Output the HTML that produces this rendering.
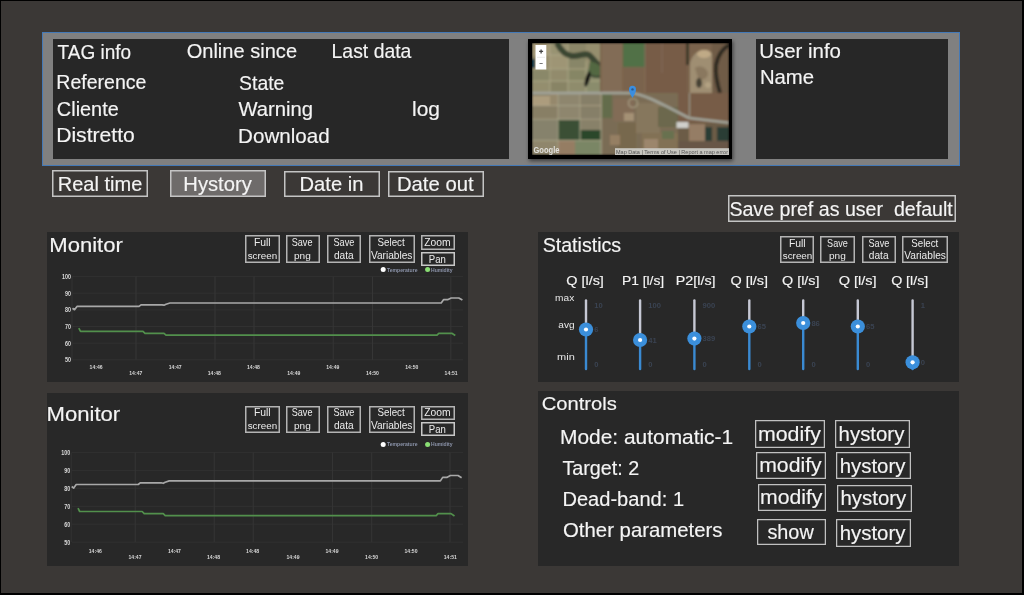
<!DOCTYPE html>
<html><head><meta charset="utf-8"><style>
html,body{margin:0;padding:0;}
body{width:1024px;height:595px;background:#000;position:relative;overflow:hidden;font-family:"Liberation Sans",sans-serif;}
.a{position:absolute;box-sizing:border-box;}
svg text{font-family:"Liberation Sans",sans-serif;white-space:pre;}
svg{will-change:transform;}
</style></head><body>
<div class="a" style="left:1px;top:1px;width:1021px;height:592px;background:#3b3836;"></div><div class="a" style="left:42px;top:32px;width:918px;height:134px;background:#808080;box-shadow: inset 0 0 0 1px #4479b6;"></div><div class="a" style="left:53px;top:39px;width:456px;height:120px;background:#272727;"></div><div class="a" style="left:756px;top:39px;width:192px;height:120px;background:#272727;"></div><div class="a" style="left:528px;top:39px;width:204px;height:120px;background:#000;box-shadow:1px 2px 4px rgba(0,0,0,0.55);"></div><div class="a" style="left:52.3px;top:170.2px;width:96.10000000000001px;height:27.30000000000001px;box-shadow: inset 0 0 0 1.5px #c4c4c4;"></div><div class="a" style="left:170.2px;top:170.2px;width:95.80000000000001px;height:27.30000000000001px;background:#6e6b6a;box-shadow: inset 0 0 0 1.5px #c4c4c4;"></div><div class="a" style="left:284.1px;top:170.5px;width:95.79999999999995px;height:26.900000000000006px;box-shadow: inset 0 0 0 1.5px #c4c4c4;"></div><div class="a" style="left:388.1px;top:170.5px;width:96.0px;height:26.900000000000006px;box-shadow: inset 0 0 0 1.5px #c4c4c4;"></div><div class="a" style="left:728px;top:194.9px;width:228.29999999999995px;height:27.599999999999994px;box-shadow: inset 0 0 0 1.5px #c4c4c4;"></div><div class="a" style="left:47px;top:232px;width:421px;height:150px;background:#282828;"></div><div class="a" style="left:47px;top:393px;width:421px;height:173px;background:#282828;"></div><div class="a" style="left:538px;top:232px;width:421px;height:150px;background:#282828;"></div><div class="a" style="left:538px;top:391px;width:421px;height:175px;background:#282828;"></div><div class="a" style="left:245.2px;top:235.3px;width:34.5px;height:27.599999999999966px;box-shadow: inset 0 0 0 1.5px #b4b4b4;"></div><div class="a" style="left:285.6px;top:235.3px;width:34.099999999999966px;height:27.599999999999966px;box-shadow: inset 0 0 0 1.5px #b4b4b4;"></div><div class="a" style="left:327px;top:235.3px;width:34.39999999999998px;height:27.599999999999966px;box-shadow: inset 0 0 0 1.5px #b4b4b4;"></div><div class="a" style="left:369px;top:235.3px;width:45.5px;height:27.599999999999966px;box-shadow: inset 0 0 0 1.5px #b4b4b4;"></div><div class="a" style="left:420.6px;top:235.2px;width:34.19999999999999px;height:14.800000000000011px;box-shadow: inset 0 0 0 1.5px #b4b4b4;"></div><div class="a" style="left:420.6px;top:251.8px;width:34.19999999999999px;height:14.099999999999966px;box-shadow: inset 0 0 0 1.5px #c8c8c8;"></div><div class="a" style="left:245.2px;top:405.6px;width:34.5px;height:27.599999999999966px;box-shadow: inset 0 0 0 1.5px #b4b4b4;"></div><div class="a" style="left:285.6px;top:405.6px;width:34.099999999999966px;height:27.599999999999966px;box-shadow: inset 0 0 0 1.5px #b4b4b4;"></div><div class="a" style="left:327px;top:405.6px;width:34.39999999999998px;height:27.599999999999966px;box-shadow: inset 0 0 0 1.5px #b4b4b4;"></div><div class="a" style="left:369px;top:405.6px;width:45.5px;height:27.599999999999966px;box-shadow: inset 0 0 0 1.5px #b4b4b4;"></div><div class="a" style="left:420.6px;top:405.5px;width:34.19999999999999px;height:14.800000000000011px;box-shadow: inset 0 0 0 1.5px #b4b4b4;"></div><div class="a" style="left:420.6px;top:422.1px;width:34.19999999999999px;height:14.099999999999966px;box-shadow: inset 0 0 0 1.5px #c8c8c8;"></div><div class="a" style="left:780.2px;top:235.8px;width:34.299999999999955px;height:27.0px;box-shadow: inset 0 0 0 1.5px #b4b4b4;"></div><div class="a" style="left:820.2px;top:235.8px;width:34.39999999999998px;height:27.0px;box-shadow: inset 0 0 0 1.5px #b4b4b4;"></div><div class="a" style="left:862.2px;top:235.8px;width:33.39999999999998px;height:27.0px;box-shadow: inset 0 0 0 1.5px #b4b4b4;"></div><div class="a" style="left:902.2px;top:235.8px;width:45.5px;height:27.0px;box-shadow: inset 0 0 0 1.5px #b4b4b4;"></div><div class="a" style="left:755.3px;top:420.3px;width:69.30000000000007px;height:27.399999999999977px;box-shadow: inset 0 0 0 1.25px #c0c0c0;"></div><div class="a" style="left:834.9px;top:420.3px;width:74.89999999999998px;height:27.399999999999977px;box-shadow: inset 0 0 0 1.25px #c0c0c0;"></div><div class="a" style="left:756.4px;top:451.6px;width:69.30000000000007px;height:27.0px;box-shadow: inset 0 0 0 1.25px #c0c0c0;"></div><div class="a" style="left:836.2px;top:452.4px;width:74.5px;height:27.100000000000023px;box-shadow: inset 0 0 0 1.25px #c0c0c0;"></div><div class="a" style="left:757.6px;top:483.6px;width:68.89999999999998px;height:27.099999999999966px;box-shadow: inset 0 0 0 1.25px #c0c0c0;"></div><div class="a" style="left:837px;top:484.8px;width:74.5px;height:27.0px;box-shadow: inset 0 0 0 1.25px #c0c0c0;"></div><div class="a" style="left:756.8px;top:518.6px;width:68.90000000000009px;height:26.799999999999955px;box-shadow: inset 0 0 0 1.25px #c0c0c0;"></div><div class="a" style="left:836.2px;top:519.4px;width:74.59999999999991px;height:27.399999999999977px;box-shadow: inset 0 0 0 1.25px #c0c0c0;"></div>
<svg class="a" style="left:531.5px;top:43px;" width="196.5" height="112" viewBox="0 0 196.5 112"><defs><filter id="bl"><feGaussianBlur stdDeviation="1.0"/><feComponentTransfer><feFuncR type="linear" slope="0.95"/><feFuncG type="linear" slope="0.95"/><feFuncB type="linear" slope="0.95"/></feComponentTransfer></filter><filter id="bl2"><feGaussianBlur stdDeviation="0.35"/></filter></defs><g filter="url(#bl)"><rect x="0" y="0" width="197" height="112" fill="#84725a"/><rect x="0" y="0" width="70" height="50" fill="#9a9272"/><rect x="0" y="0" width="18" height="12" fill="#a89c7a"/><rect x="18" y="0" width="18" height="12" fill="#9c9676"/><rect x="36" y="0" width="18" height="12" fill="#8f8a6a"/><rect x="0" y="12" width="18" height="14" fill="#9a9070"/><rect x="18" y="12" width="18" height="14" fill="#a29a78"/><rect x="36" y="12" width="18" height="14" fill="#8c8a6a"/><rect x="0" y="26" width="18" height="12" fill="#8e8c6c"/><rect x="18" y="26" width="18" height="12" fill="#958f70"/><rect x="36" y="26" width="18" height="12" fill="#8a8a68"/><rect x="0" y="38" width="18" height="12" fill="#989272"/><rect x="18" y="38" width="18" height="12" fill="#8c8868"/><rect x="36" y="38" width="18" height="12" fill="#939070"/><rect x="54" y="26" width="16" height="24" fill="#8e9070"/><path d="M18,0 V50 M36,0 V50 M54,18 V50 M0,12 H54 M0,26 H54 M0,38 H70" stroke="#b2ab8c" stroke-width="0.9" fill="none"/><rect x="0" y="16" width="3" height="9" fill="#1e4a5a"/><path d="M25,0 C28,6 32,12 40,13 C48,14 52,9 57,12 C62,16 64,22 70,24 C73,26 74,29 70,31 C66,33 62,32 58,30" stroke="#3e4a36" stroke-width="6" fill="none"/><path d="M58,18 C64,20 70,22 72,30 C68,34 62,34 56,30 Z" fill="#566a44"/><ellipse cx="55.5" cy="36" rx="2.2" ry="8" transform="rotate(15 55.5 36)" fill="#121414"/><rect x="68" y="0" width="129" height="50" fill="#7e6650"/><rect x="70" y="0" width="20" height="50" fill="#86705a"/><rect x="91" y="0" width="22" height="24" fill="#557548"/><rect x="113" y="0" width="42" height="50" fill="#7a5e48"/><path d="M113,0 V50 M130,0 V30" stroke="#8c7a64" stroke-width="0.8"/><rect x="154" y="0" width="3" height="22" fill="#403a2c"/><path d="M158,50 L158,20 C160,12 166,6 174,7 C181,8 182,14 180,22 L180,50 Z" fill="#a39276"/><ellipse cx="172" cy="11" rx="7" ry="4" fill="#c4ae8a"/><path d="M163,25 C168,22 174,24 176,30 C176,36 170,38 166,35 Z" fill="#8e7c62"/><ellipse cx="167" cy="40" rx="3" ry="5" fill="#4a4438"/><ellipse cx="176" cy="42" rx="3" ry="3" fill="#b8a686"/><rect x="180" y="0" width="17" height="50" fill="#735e48"/><path d="M197,2 C190,6 186,12 184,22 C183,32 185,40 188,50" stroke="#332e28" stroke-width="4" fill="none"/><rect x="0" y="50" width="70" height="62" fill="#8e8670"/><rect x="0" y="53" width="18" height="10" fill="#b0a080"/><rect x="18" y="50" width="8" height="13" fill="#9a8c70"/><rect x="26" y="50" width="22" height="27" fill="#928a72"/><rect x="48" y="50" width="22" height="27" fill="#8a826a"/><rect x="0" y="63" width="26" height="13" fill="#8c8268"/><rect x="0" y="76" width="26" height="21" fill="#8a8670"/><rect x="26" y="77" width="22" height="20" fill="#3e5238"/><rect x="48" y="77" width="21" height="10" fill="#8c846c"/><rect x="48.5" y="87" width="20.5" height="10" fill="#2e4a2e"/><rect x="0" y="97" width="26" height="15" fill="#938a6e"/><rect x="26" y="97" width="17" height="15" fill="#9a8066"/><rect x="43" y="97" width="26" height="15" fill="#7e8a68"/><path d="M26,50 V112 M48,50 V97 M69,50 V112 M0,62.6 H69 M0,76.2 H69 M0,97.4 H69" stroke="#aea88c" stroke-width="0.9" fill="none"/><rect x="70" y="50" width="76" height="62" fill="#7e7058"/><rect x="70" y="50" width="10" height="25" fill="#66704e"/><rect x="82" y="56" width="20" height="22" fill="#86705a"/><rect x="104" y="60" width="24" height="30" fill="#8a7a60"/><rect x="86" y="80" width="18" height="30" fill="#7a6a50"/><rect x="110" y="90" width="36" height="22" fill="#867458"/><rect x="126" y="64" width="20" height="20" fill="#6e6a50"/><circle cx="101" cy="60" r="4.5" fill="none" stroke="#b0a68c" stroke-width="1.6" opacity="0.7"/><rect x="92" y="70" width="10" height="8" fill="#a89478"/><rect x="112" y="96" width="14" height="10" fill="#a08a70"/><rect x="78" y="92" width="10" height="10" fill="#9a8266"/><rect x="130" y="88" width="12" height="8" fill="#6a7452"/><rect x="146" y="50" width="51" height="30" fill="#7a5e48"/><rect x="146" y="80" width="51" height="32" fill="#6e5e4a"/><rect x="157" y="81" width="16" height="17" fill="#9a8068"/><rect x="173" y="84" width="7" height="14" fill="#2e4038"/><rect x="185" y="84" width="12" height="14" fill="#2e4038"/><rect x="146" y="98" width="51" height="14" fill="#6a5a48"/><path d="M0,50 L98,50 C112,51 128,60 157,75 L197,79.7" stroke="#a6a89e" stroke-width="2.6" fill="none"/><path d="M157.5,50 V76" stroke="#a09e90" stroke-width="1.2" fill="none"/><rect x="144.5" y="79" width="12" height="6" fill="#d4d4d0"/></g><g filter="url(#bl2)"><path d="M100.5,55 C98,50.5 97,49 97,46.2 A3.5,3.5 0 1 1 104,46.2 C104,49 103,50.5 100.5,55 Z" fill="#3a8ee0"/><circle cx="100.5" cy="46.4" r="1.2" fill="#2a5a90"/><rect x="3.5" y="2" width="10.8" height="24.5" fill="#ffffff"/><line x1="5" y1="14.3" x2="13" y2="14.3" stroke="#dcdcdc" stroke-width="0.6"/><path d="M7.1,8.4 H11.1 M9.1,6.4 V10.4" stroke="#444" stroke-width="1.3"/><path d="M7.5,20.5 H10.7" stroke="#777" stroke-width="1"/><text x="1.5" y="109.5" font-size="9.5" font-weight="bold" fill="#eeeeee" opacity="0.85" textLength="26" lengthAdjust="spacingAndGlyphs">Google</text><rect x="83" y="105.2" width="114" height="6.8" fill="#d0d0cc" opacity="0.9"/><text x="84" y="110.6" font-size="5.2" fill="#555" textLength="112" lengthAdjust="spacingAndGlyphs">Map Data | Terms of Use | Report a map error</text></g></svg>
<svg class="a" style="left:0;top:0" width="1024" height="595" viewBox="0 0 1024 595">
<line x1="72" y1="276.6" x2="463" y2="276.6" stroke="#313131" stroke-width="1"/><line x1="72" y1="293.2" x2="463" y2="293.2" stroke="#313131" stroke-width="1"/><line x1="72" y1="309.9" x2="463" y2="309.9" stroke="#313131" stroke-width="1"/><line x1="72" y1="326.5" x2="463" y2="326.5" stroke="#313131" stroke-width="1"/><line x1="72" y1="343.2" x2="463" y2="343.2" stroke="#313131" stroke-width="1"/><line x1="72" y1="359.8" x2="463" y2="359.8" stroke="#313131" stroke-width="1"/><line x1="136" y1="276.6" x2="136" y2="359.8" stroke="#363636" stroke-width="1"/><line x1="215" y1="276.6" x2="215" y2="359.8" stroke="#363636" stroke-width="1"/><line x1="254" y1="276.6" x2="254" y2="359.8" stroke="#363636" stroke-width="1"/><line x1="333.2" y1="276.6" x2="333.2" y2="359.8" stroke="#363636" stroke-width="1"/><line x1="372.5" y1="276.6" x2="372.5" y2="359.8" stroke="#363636" stroke-width="1"/><line x1="450.8" y1="276.6" x2="450.8" y2="359.8" stroke="#363636" stroke-width="1"/><line x1="72" y1="276.6" x2="72" y2="359.8" stroke="#333" stroke-width="1"/><text x="62" y="278.9" font-size="6.4" font-weight="bold" fill="#d8d8d8" textLength="9" lengthAdjust="spacingAndGlyphs">100</text><text x="65" y="295.5" font-size="6.4" font-weight="bold" fill="#d8d8d8" textLength="6" lengthAdjust="spacingAndGlyphs">90</text><text x="65" y="312.2" font-size="6.4" font-weight="bold" fill="#d8d8d8" textLength="6" lengthAdjust="spacingAndGlyphs">80</text><text x="65" y="328.8" font-size="6.4" font-weight="bold" fill="#d8d8d8" textLength="6" lengthAdjust="spacingAndGlyphs">70</text><text x="65" y="345.5" font-size="6.4" font-weight="bold" fill="#d8d8d8" textLength="6" lengthAdjust="spacingAndGlyphs">60</text><text x="65" y="362.1" font-size="6.4" font-weight="bold" fill="#d8d8d8" textLength="6" lengthAdjust="spacingAndGlyphs">50</text><text x="96.1" y="369.3" font-size="6" font-weight="bold" text-anchor="middle" fill="#d8d8d8" textLength="13" lengthAdjust="spacingAndGlyphs">14:46</text><text x="135.8" y="375.0" font-size="6" font-weight="bold" text-anchor="middle" fill="#d8d8d8" textLength="13" lengthAdjust="spacingAndGlyphs">14:47</text><text x="175.2" y="369.3" font-size="6" font-weight="bold" text-anchor="middle" fill="#d8d8d8" textLength="13" lengthAdjust="spacingAndGlyphs">14:47</text><text x="214.3" y="375.0" font-size="6" font-weight="bold" text-anchor="middle" fill="#d8d8d8" textLength="13" lengthAdjust="spacingAndGlyphs">14:48</text><text x="253.4" y="369.3" font-size="6" font-weight="bold" text-anchor="middle" fill="#d8d8d8" textLength="13" lengthAdjust="spacingAndGlyphs">14:48</text><text x="293.8" y="375.0" font-size="6" font-weight="bold" text-anchor="middle" fill="#d8d8d8" textLength="13" lengthAdjust="spacingAndGlyphs">14:49</text><text x="332.8" y="369.3" font-size="6" font-weight="bold" text-anchor="middle" fill="#d8d8d8" textLength="13" lengthAdjust="spacingAndGlyphs">14:49</text><text x="372.4" y="375.0" font-size="6" font-weight="bold" text-anchor="middle" fill="#d8d8d8" textLength="13" lengthAdjust="spacingAndGlyphs">14:50</text><text x="411.8" y="369.3" font-size="6" font-weight="bold" text-anchor="middle" fill="#d8d8d8" textLength="13" lengthAdjust="spacingAndGlyphs">14:50</text><text x="451.1" y="375.0" font-size="6" font-weight="bold" text-anchor="middle" fill="#d8d8d8" textLength="13" lengthAdjust="spacingAndGlyphs">14:51</text><polyline points="72.5,308.2 74.5,309.7 77.0,306.4 139.0,306.4 141.0,304.8 162.0,304.8 164.0,305.2 166.0,304.2 170.0,303.0 441.2,303.0 443.5,299.7 447.6,299.7 451.2,298.0 458.8,298.0 462.4,300.1" fill="none" stroke="#a8a8a8" stroke-width="1.7" stroke-linejoin="round"/><polyline points="78.8,328.2 80.5,331.3 143.0,331.3 145.0,333.3 164.0,333.3 166.0,335.2 437.0,335.2 438.8,333.3 451.8,333.3 455.3,335.5" fill="none" stroke="#52904c" stroke-width="1.7" stroke-linejoin="round"/><circle cx="383.2" cy="269.5" r="2.5" fill="#ffffff"/><text x="387" y="271.5" font-size="5.6" font-weight="bold" fill="#8c94aa" textLength="30.5" lengthAdjust="spacingAndGlyphs">Temperature</text><circle cx="427.6" cy="269.5" r="2.5" fill="#8ade74"/><text x="431" y="271.5" font-size="5.6" font-weight="bold" fill="#8c94aa" textLength="21.6" lengthAdjust="spacingAndGlyphs">Humidity</text><line x1="72" y1="452.4" x2="463" y2="452.4" stroke="#313131" stroke-width="1"/><line x1="72" y1="470.4" x2="463" y2="470.4" stroke="#313131" stroke-width="1"/><line x1="72" y1="488.3" x2="463" y2="488.3" stroke="#313131" stroke-width="1"/><line x1="72" y1="506.3" x2="463" y2="506.3" stroke="#313131" stroke-width="1"/><line x1="72" y1="524.2" x2="463" y2="524.2" stroke="#313131" stroke-width="1"/><line x1="72" y1="542.2" x2="463" y2="542.2" stroke="#313131" stroke-width="1"/><line x1="135.2" y1="452.4" x2="135.2" y2="542.2" stroke="#363636" stroke-width="1"/><line x1="214.2" y1="452.4" x2="214.2" y2="542.2" stroke="#363636" stroke-width="1"/><line x1="253.2" y1="452.4" x2="253.2" y2="542.2" stroke="#363636" stroke-width="1"/><line x1="332.4" y1="452.4" x2="332.4" y2="542.2" stroke="#363636" stroke-width="1"/><line x1="371.7" y1="452.4" x2="371.7" y2="542.2" stroke="#363636" stroke-width="1"/><line x1="450.0" y1="452.4" x2="450.0" y2="542.2" stroke="#363636" stroke-width="1"/><line x1="71.2" y1="452.4" x2="71.2" y2="542.2" stroke="#333" stroke-width="1"/><text x="61.2" y="454.7" font-size="6.4" font-weight="bold" fill="#d8d8d8" textLength="9" lengthAdjust="spacingAndGlyphs">100</text><text x="64.2" y="472.7" font-size="6.4" font-weight="bold" fill="#d8d8d8" textLength="6" lengthAdjust="spacingAndGlyphs">90</text><text x="64.2" y="490.6" font-size="6.4" font-weight="bold" fill="#d8d8d8" textLength="6" lengthAdjust="spacingAndGlyphs">80</text><text x="64.2" y="508.6" font-size="6.4" font-weight="bold" fill="#d8d8d8" textLength="6" lengthAdjust="spacingAndGlyphs">70</text><text x="64.2" y="526.5" font-size="6.4" font-weight="bold" fill="#d8d8d8" textLength="6" lengthAdjust="spacingAndGlyphs">60</text><text x="64.2" y="544.5" font-size="6.4" font-weight="bold" fill="#d8d8d8" textLength="6" lengthAdjust="spacingAndGlyphs">50</text><text x="95.3" y="552.7" font-size="6" font-weight="bold" text-anchor="middle" fill="#d8d8d8" textLength="13" lengthAdjust="spacingAndGlyphs">14:46</text><text x="135.0" y="558.8" font-size="6" font-weight="bold" text-anchor="middle" fill="#d8d8d8" textLength="13" lengthAdjust="spacingAndGlyphs">14:47</text><text x="174.39999999999998" y="552.7" font-size="6" font-weight="bold" text-anchor="middle" fill="#d8d8d8" textLength="13" lengthAdjust="spacingAndGlyphs">14:47</text><text x="213.5" y="558.8" font-size="6" font-weight="bold" text-anchor="middle" fill="#d8d8d8" textLength="13" lengthAdjust="spacingAndGlyphs">14:48</text><text x="252.6" y="552.7" font-size="6" font-weight="bold" text-anchor="middle" fill="#d8d8d8" textLength="13" lengthAdjust="spacingAndGlyphs">14:48</text><text x="293.0" y="558.8" font-size="6" font-weight="bold" text-anchor="middle" fill="#d8d8d8" textLength="13" lengthAdjust="spacingAndGlyphs">14:49</text><text x="332.0" y="552.7" font-size="6" font-weight="bold" text-anchor="middle" fill="#d8d8d8" textLength="13" lengthAdjust="spacingAndGlyphs">14:49</text><text x="371.59999999999997" y="558.8" font-size="6" font-weight="bold" text-anchor="middle" fill="#d8d8d8" textLength="13" lengthAdjust="spacingAndGlyphs">14:50</text><text x="411.0" y="552.7" font-size="6" font-weight="bold" text-anchor="middle" fill="#d8d8d8" textLength="13" lengthAdjust="spacingAndGlyphs">14:50</text><text x="450.3" y="558.8" font-size="6" font-weight="bold" text-anchor="middle" fill="#d8d8d8" textLength="13" lengthAdjust="spacingAndGlyphs">14:51</text><polyline points="71.7,486.5 73.7,488.1 76.2,484.5 138.2,484.5 140.2,482.8 161.2,482.8 163.2,483.3 165.2,482.2 169.2,480.9 440.4,480.9 442.7,477.4 446.8,477.4 450.4,475.5 458.0,475.5 461.6,477.7" fill="none" stroke="#a8a8a8" stroke-width="1.7" stroke-linejoin="round"/><polyline points="78.0,508.1 79.7,511.5 142.2,511.5 144.2,513.6 163.2,513.6 165.2,515.6 436.2,515.6 438.0,513.6 451.0,513.6 454.5,516.0" fill="none" stroke="#52904c" stroke-width="1.7" stroke-linejoin="round"/><circle cx="383.2" cy="444.4" r="2.5" fill="#ffffff"/><text x="387" y="446.4" font-size="5.6" font-weight="bold" fill="#8c94aa" textLength="30.5" lengthAdjust="spacingAndGlyphs">Temperature</text><circle cx="427.6" cy="444.4" r="2.5" fill="#8ade74"/><text x="431" y="446.4" font-size="5.6" font-weight="bold" fill="#8c94aa" textLength="21.6" lengthAdjust="spacingAndGlyphs">Humidity</text>
<line x1="586" y1="300.5" x2="586" y2="329.5" stroke="#c6c8d4" stroke-width="2.4" stroke-linecap="round"/><line x1="586" y1="329.5" x2="586" y2="369" stroke="#3a8ad2" stroke-width="2.4" stroke-linecap="round"/><circle cx="586" cy="329.5" r="7.1" fill="#3b8fdb"/><circle cx="586" cy="329.5" r="2.1" fill="#ffffff"/><text x="594.2" y="308.0" font-size="7.6" font-weight="bold" fill="#3a4352">10</text><text x="594.2" y="332.1" font-size="7.6" font-weight="bold" fill="#3a4352">6</text><text x="594.2" y="366.90000000000003" font-size="7.6" font-weight="bold" fill="#3a4352">0</text><line x1="640.1" y1="300.5" x2="640.1" y2="340" stroke="#c6c8d4" stroke-width="2.4" stroke-linecap="round"/><line x1="640.1" y1="340" x2="640.1" y2="369" stroke="#3a8ad2" stroke-width="2.4" stroke-linecap="round"/><circle cx="640.1" cy="340" r="7.1" fill="#3b8fdb"/><circle cx="640.1" cy="340" r="2.1" fill="#ffffff"/><text x="648.3000000000001" y="308.0" font-size="7.6" font-weight="bold" fill="#3a4352">100</text><text x="648.3000000000001" y="342.6" font-size="7.6" font-weight="bold" fill="#3a4352">41</text><text x="648.3000000000001" y="366.90000000000003" font-size="7.6" font-weight="bold" fill="#3a4352">0</text><line x1="694.4" y1="300.5" x2="694.4" y2="338.6" stroke="#c6c8d4" stroke-width="2.4" stroke-linecap="round"/><line x1="694.4" y1="338.6" x2="694.4" y2="369" stroke="#3a8ad2" stroke-width="2.4" stroke-linecap="round"/><circle cx="694.4" cy="338.6" r="7.1" fill="#3b8fdb"/><circle cx="694.4" cy="338.6" r="2.1" fill="#ffffff"/><text x="702.6" y="308.0" font-size="7.6" font-weight="bold" fill="#3a4352">900</text><text x="702.6" y="341.20000000000005" font-size="7.6" font-weight="bold" fill="#3a4352">389</text><text x="702.6" y="366.90000000000003" font-size="7.6" font-weight="bold" fill="#3a4352">0</text><line x1="749.3" y1="300.5" x2="749.3" y2="326.5" stroke="#c6c8d4" stroke-width="2.4" stroke-linecap="round"/><line x1="749.3" y1="326.5" x2="749.3" y2="369" stroke="#3a8ad2" stroke-width="2.4" stroke-linecap="round"/><circle cx="749.3" cy="326.5" r="7.1" fill="#3b8fdb"/><circle cx="749.3" cy="326.5" r="2.1" fill="#ffffff"/><text x="757.5" y="329.1" font-size="7.6" font-weight="bold" fill="#3a4352">65</text><text x="757.5" y="366.90000000000003" font-size="7.6" font-weight="bold" fill="#3a4352">0</text><line x1="803.2" y1="300.5" x2="803.2" y2="323" stroke="#c6c8d4" stroke-width="2.4" stroke-linecap="round"/><line x1="803.2" y1="323" x2="803.2" y2="369" stroke="#3a8ad2" stroke-width="2.4" stroke-linecap="round"/><circle cx="803.2" cy="323" r="7.1" fill="#3b8fdb"/><circle cx="803.2" cy="323" r="2.1" fill="#ffffff"/><text x="811.4000000000001" y="325.6" font-size="7.6" font-weight="bold" fill="#3a4352">86</text><text x="811.4000000000001" y="366.90000000000003" font-size="7.6" font-weight="bold" fill="#3a4352">0</text><line x1="857.8" y1="300.5" x2="857.8" y2="326.5" stroke="#c6c8d4" stroke-width="2.4" stroke-linecap="round"/><line x1="857.8" y1="326.5" x2="857.8" y2="369" stroke="#3a8ad2" stroke-width="2.4" stroke-linecap="round"/><circle cx="857.8" cy="326.5" r="7.1" fill="#3b8fdb"/><circle cx="857.8" cy="326.5" r="2.1" fill="#ffffff"/><text x="866.0" y="329.1" font-size="7.6" font-weight="bold" fill="#3a4352">65</text><text x="866.0" y="366.90000000000003" font-size="7.6" font-weight="bold" fill="#3a4352">0</text><line x1="912.6" y1="300.5" x2="912.6" y2="362.3" stroke="#c6c8d4" stroke-width="2.4" stroke-linecap="round"/><line x1="912.6" y1="362.3" x2="912.6" y2="369" stroke="#3a8ad2" stroke-width="2.4" stroke-linecap="round"/><circle cx="912.6" cy="362.3" r="7.1" fill="#3b8fdb"/><circle cx="912.6" cy="362.3" r="2.1" fill="#ffffff"/><text x="920.8000000000001" y="308.0" font-size="7.6" font-weight="bold" fill="#3a4352">1</text><text x="920.8000000000001" y="364.90000000000003" font-size="7.6" font-weight="bold" fill="#3a4352">0</text>
<text transform="translate(57.50,59.40) scale(0.9779,1)" font-size="19.48" fill="#f4f4f4" stroke="#f4f4f4" stroke-width="0.15">TAG info</text>
<text transform="translate(186.66,58.40) scale(1.0302,1)" font-size="19.48" fill="#f4f4f4" stroke="#f4f4f4" stroke-width="0.15">Online since</text>
<text transform="translate(331.58,58.40) scale(0.9966,1)" font-size="19.48" fill="#f4f4f4" stroke="#f4f4f4" stroke-width="0.15">Last data</text>
<text transform="translate(56.27,88.70) scale(1.0036,1)" font-size="19.48" fill="#f4f4f4" stroke="#f4f4f4" stroke-width="0.15">Reference</text>
<text transform="translate(56.87,115.50) scale(1.0212,1)" font-size="19.48" fill="#f4f4f4" stroke="#f4f4f4" stroke-width="0.15">Cliente</text>
<text transform="translate(56.15,141.80) scale(1.0850,1)" font-size="19.48" fill="#f4f4f4" stroke="#f4f4f4" stroke-width="0.15">Distretto</text>
<text transform="translate(239.09,89.60) scale(0.9955,1)" font-size="19.48" fill="#f4f4f4" stroke="#f4f4f4" stroke-width="0.15">State</text>
<text transform="translate(238.40,116.30) scale(1.0405,1)" font-size="19.48" fill="#f4f4f4" stroke="#f4f4f4" stroke-width="0.15">Warning</text>
<text transform="translate(238.09,142.90) scale(1.0579,1)" font-size="19.48" fill="#f4f4f4" stroke="#f4f4f4" stroke-width="0.15">Download</text>
<text transform="translate(411.99,116.20) scale(1.0337,1)" font-size="20.29" fill="#f4f4f4" stroke="#f4f4f4" stroke-width="0.15">log</text>
<text transform="translate(759.22,58.40) scale(1.0493,1)" font-size="19.48" fill="#f4f4f4" stroke="#f4f4f4" stroke-width="0.15">User info</text>
<text transform="translate(759.91,84.20) scale(1.0430,1)" font-size="19.48" fill="#f4f4f4" stroke="#f4f4f4" stroke-width="0.15">Name</text>
<text transform="translate(57.74,191.10) scale(1.0057,1)" font-size="19.91" fill="#f4f4f4" stroke="#f4f4f4" stroke-width="0.15">Real time</text>
<text transform="translate(183.32,191.10) scale(1.0148,1)" font-size="19.91" fill="#f4f4f4" stroke="#f4f4f4" stroke-width="0.15">Hystory</text>
<text transform="translate(299.52,191.00) scale(1.0445,1)" font-size="19.34" fill="#f4f4f4" stroke="#f4f4f4" stroke-width="0.15">Date in</text>
<text transform="translate(396.91,191.00) scale(1.0506,1)" font-size="19.34" fill="#f4f4f4" stroke="#f4f4f4" stroke-width="0.15">Date out</text>
<text transform="translate(729.39,216.40) scale(0.9852,1)" font-size="19.91" fill="#f4f4f4" stroke="#f4f4f4" stroke-width="0.15">Save pref as user  default</text>
<text transform="translate(49.27,252.30) scale(1.1090,1)" font-size="19.91" fill="#f4f4f4" stroke="#f4f4f4" stroke-width="0.15">Monitor</text>
<text transform="translate(46.47,420.80) scale(1.0949,1)" font-size="20.20" fill="#f4f4f4" stroke="#f4f4f4" stroke-width="0.15">Monitor</text>
<text transform="translate(542.69,251.90) scale(0.9857,1)" font-size="19.91" fill="#f4f4f4" stroke="#f4f4f4" stroke-width="0.15">Statistics</text>
<text transform="translate(541.65,409.80) scale(1.0594,1)" font-size="19.06" fill="#f4f4f4" stroke="#f4f4f4" stroke-width="0.15">Controls</text>
<text transform="translate(560.07,443.80) scale(1.0434,1)" font-size="20.05" fill="#f4f4f4" stroke="#f4f4f4" stroke-width="0.15">Mode: automatic-1</text>
<text transform="translate(562.39,474.60) scale(0.9869,1)" font-size="20.05" fill="#f4f4f4" stroke="#f4f4f4" stroke-width="0.15">Target: 2</text>
<text transform="translate(562.43,506.30) scale(1.0085,1)" font-size="19.91" fill="#f4f4f4" stroke="#f4f4f4" stroke-width="0.15">Dead-band: 1</text>
<text transform="translate(563.05,537.00) scale(1.0522,1)" font-size="19.34" fill="#f4f4f4" stroke="#f4f4f4" stroke-width="0.15">Other parameters</text>
<text transform="translate(757.96,440.80) scale(1.0392,1)" font-size="20.56" fill="#f4f4f4" stroke="#f4f4f4" stroke-width="0.15">modify</text>
<text transform="translate(838.62,440.80) scale(0.9925,1)" font-size="20.56" fill="#f4f4f4" stroke="#f4f4f4" stroke-width="0.15">hystory</text>
<text transform="translate(759.17,471.70) scale(1.0325,1)" font-size="20.56" fill="#f4f4f4" stroke="#f4f4f4" stroke-width="0.15">modify</text>
<text transform="translate(839.72,472.50) scale(0.9925,1)" font-size="20.56" fill="#f4f4f4" stroke="#f4f4f4" stroke-width="0.15">hystory</text>
<text transform="translate(759.97,504.10) scale(1.0325,1)" font-size="20.56" fill="#f4f4f4" stroke="#f4f4f4" stroke-width="0.15">modify</text>
<text transform="translate(840.52,505.10) scale(0.9925,1)" font-size="20.56" fill="#f4f4f4" stroke="#f4f4f4" stroke-width="0.15">hystory</text>
<text transform="translate(767.39,538.70) scale(0.9660,1)" font-size="20.56" fill="#f4f4f4" stroke="#f4f4f4" stroke-width="0.15">show</text>
<text transform="translate(839.72,540.00) scale(0.9925,1)" font-size="20.56" fill="#f4f4f4" stroke="#f4f4f4" stroke-width="0.15">hystory</text>
<text transform="translate(566.33,284.90) scale(1.0864,1)" font-size="13.23" fill="#f4f4f4" stroke="#f4f4f4" stroke-width="0.15">Q [l/s]</text>
<text transform="translate(621.92,284.90) scale(1.0462,1)" font-size="13.23" fill="#f4f4f4" stroke="#f4f4f4" stroke-width="0.15">P1 [l/s]</text>
<text transform="translate(675.78,284.90) scale(1.0819,1)" font-size="13.23" fill="#f4f4f4" stroke="#f4f4f4" stroke-width="0.15">P2[l/s]</text>
<text transform="translate(730.42,284.90) scale(1.0894,1)" font-size="13.23" fill="#f4f4f4" stroke="#f4f4f4" stroke-width="0.15">Q [l/s]</text>
<text transform="translate(782.03,284.90) scale(1.0834,1)" font-size="13.23" fill="#f4f4f4" stroke="#f4f4f4" stroke-width="0.15">Q [l/s]</text>
<text transform="translate(838.72,284.90) scale(1.0984,1)" font-size="13.23" fill="#f4f4f4" stroke="#f4f4f4" stroke-width="0.15">Q [l/s]</text>
<text transform="translate(891.13,284.90) scale(1.0743,1)" font-size="13.23" fill="#f4f4f4" stroke="#f4f4f4" stroke-width="0.15">Q [l/s]</text>
<text transform="translate(555.07,300.70) scale(1.0550,1)" font-size="9.60" fill="#e8e8e8">max</text>
<text transform="translate(558.28,327.80) scale(1.0317,1)" font-size="9.79" fill="#e8e8e8">avg</text>
<text transform="translate(557.11,359.60) scale(1.1013,1)" font-size="9.98" fill="#e8e8e8">min</text>
<text transform="translate(253.89,246.10) scale(0.9908,1)" font-size="10.52" fill="#ececec">Full</text>
<text transform="translate(247.65,259.00) scale(1.0240,1)" font-size="9.60" fill="#ececec">screen</text>
<text transform="translate(291.72,246.10) scale(0.8652,1)" font-size="10.52" fill="#ececec">Save</text>
<text transform="translate(293.97,259.00) scale(1.0485,1)" font-size="9.60" fill="#ececec">png</text>
<text transform="translate(333.51,246.10) scale(0.8695,1)" font-size="10.52" fill="#ececec">Save</text>
<text transform="translate(333.98,258.90) scale(0.9434,1)" font-size="10.76" fill="#ececec">data</text>
<text transform="translate(377.59,246.10) scale(0.9289,1)" font-size="10.52" fill="#ececec">Select</text>
<text transform="translate(370.90,258.90) scale(0.9657,1)" font-size="10.52" fill="#ececec">Variables</text>
<text transform="translate(424.18,246.00) scale(1.0069,1)" font-size="10.24" fill="#ececec">Zoom</text>
<text transform="translate(428.85,262.60) scale(0.9380,1)" font-size="10.24" fill="#ececec">Pan</text>
<text transform="translate(253.89,416.40) scale(0.9908,1)" font-size="10.52" fill="#ececec">Full</text>
<text transform="translate(247.65,429.30) scale(1.0240,1)" font-size="9.60" fill="#ececec">screen</text>
<text transform="translate(291.72,416.40) scale(0.8652,1)" font-size="10.52" fill="#ececec">Save</text>
<text transform="translate(293.97,429.30) scale(1.0485,1)" font-size="9.60" fill="#ececec">png</text>
<text transform="translate(333.51,416.40) scale(0.8695,1)" font-size="10.52" fill="#ececec">Save</text>
<text transform="translate(333.98,429.20) scale(0.9434,1)" font-size="10.76" fill="#ececec">data</text>
<text transform="translate(377.59,416.40) scale(0.9289,1)" font-size="10.52" fill="#ececec">Select</text>
<text transform="translate(370.90,429.20) scale(0.9657,1)" font-size="10.52" fill="#ececec">Variables</text>
<text transform="translate(424.18,416.30) scale(1.0069,1)" font-size="10.24" fill="#ececec">Zoom</text>
<text transform="translate(428.85,432.90) scale(0.9380,1)" font-size="10.24" fill="#ececec">Pan</text>
<text transform="translate(788.89,246.50) scale(0.9908,1)" font-size="10.52" fill="#ececec">Full</text>
<text transform="translate(782.80,259.40) scale(1.0240,1)" font-size="9.60" fill="#ececec">screen</text>
<text transform="translate(827.07,246.50) scale(0.8652,1)" font-size="10.52" fill="#ececec">Save</text>
<text transform="translate(828.97,259.40) scale(1.0485,1)" font-size="9.60" fill="#ececec">png</text>
<text transform="translate(868.51,246.50) scale(0.8695,1)" font-size="10.52" fill="#ececec">Save</text>
<text transform="translate(868.83,259.40) scale(0.9434,1)" font-size="10.76" fill="#ececec">data</text>
<text transform="translate(911.19,246.50) scale(0.9289,1)" font-size="10.52" fill="#ececec">Select</text>
<text transform="translate(904.30,259.40) scale(0.9657,1)" font-size="10.52" fill="#ececec">Variables</text>
</svg>
</body></html>
